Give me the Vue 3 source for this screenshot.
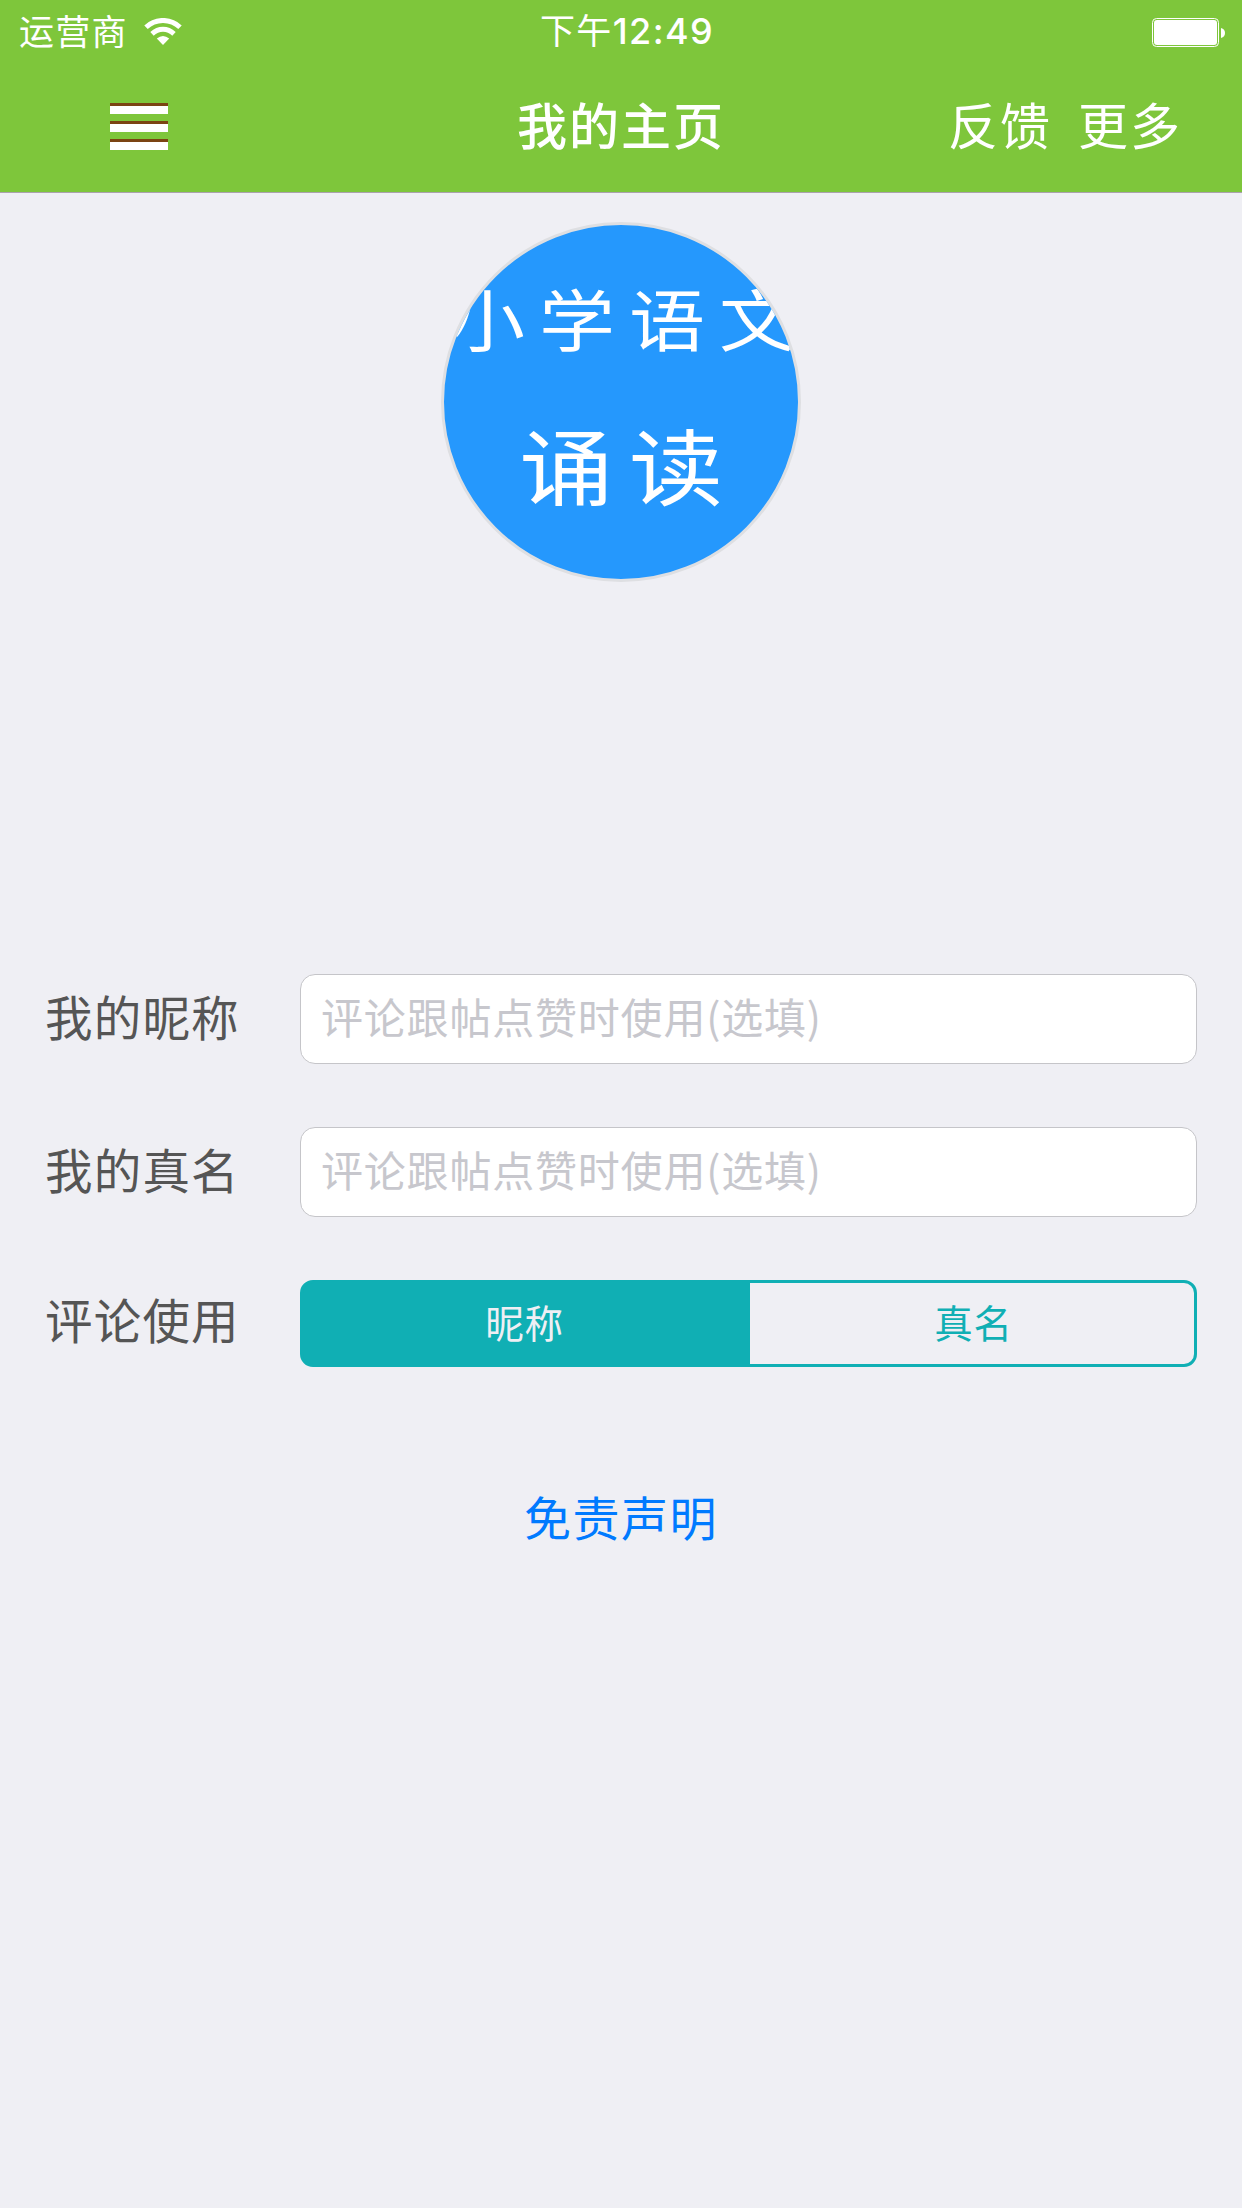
<!-- src/views/MyHome.vue -->
<template>
  <div class="page">
    <header class="header">
      <div class="status-bar">
        <div class="carrier">
          <span>运营商</span>
          <svg class="wifi" viewBox="0 0 38 28">
            <g fill="none" stroke="#fff" stroke-width="5">
              <path d="M2 9.2C11.5 .2 26.5 .2 36 9.2" />
              <path d="M8 15.8C14.5 9.8 23.5 9.8 30 15.8" />
            </g>
            <path d="M19 27L12.8 20.5Q19 15.5 25.2 20.5Z" fill="#fff" />
          </svg>
        </div>
        <div class="time">下午<span class="digits">12:49</span></div>
        <svg class="battery" viewBox="0 0 74 29">
          <rect x=".5" y=".5" width="66" height="28" rx="4" fill="none" stroke="#fff" />
          <rect x="2" y="2" width="63" height="25" rx="3" fill="#fff" />
          <path d="M69 10Q73 11 73 15Q73 19 69 20Z" fill="#fff" />
        </svg>
      </div>
      <nav class="nav-bar">
        <button class="menu" aria-label="菜单">
          <i v-for="n in 3" :key="n" />
        </button>
        <h1 class="title">我的主页</h1>
        <div class="actions">
          <button>反馈</button>
          <button>更多</button>
        </div>
      </nav>
    </header>

    <main class="content">
      <div class="avatar">
        <span class="avatar-top">小学语文</span>
        <span class="avatar-bottom">诵读</span>
      </div>

      <form class="form" @submit.prevent>
        <template v-for="field in fields" :key="field.key">
          <label :for="field.key">{{ field.label }}</label>
          <input
            :id="field.key"
            v-model="profile[field.key]"
            type="text"
            placeholder="评论跟帖点赞时使用(选填)"
          />
        </template>
        <label class="segment-label">评论使用</label>
        <div class="segment">
          <button
            v-for="(option, index) in options"
            :key="option"
            type="button"
            :class="{ active: selected === index }"
            @click="selected = index"
          >{{ option }}</button>
        </div>
      </form>

      <button class="disclaimer">免责声明</button>
    </main>
  </div>
</template>

<script setup>
import { reactive, ref } from 'vue'

const fields = [
  { key: 'nickname', label: '我的昵称' },
  { key: 'realname', label: '我的真名' }
]
const options = ['昵称', '真名']

const profile = reactive({ nickname: '', realname: '' })
const selected = ref(0)
</script>

<style>
body {
  margin: 0;
  background: #efeff4;
}
</style>

<style scoped>
.page {
  min-height: 2208px;
  background: #efeff4;
  font-family: "Noto Sans CJK SC", sans-serif;
  font-weight: 400;
}

button {
  padding: 0;
  border: none;
  background: none;
  font: inherit;
  color: inherit;
  letter-spacing: inherit;
  cursor: pointer;
}

.header {
  box-sizing: border-box;
  height: 193px;
  background: #7ec63b;
  border-bottom: 1px solid #aaa2ad;
  color: #fff;
}

.status-bar {
  display: grid;
  grid-template-columns: 1fr auto 1fr;
  align-items: center;
  height: 60px;
  padding: 0 16px 0 19px;
  font-size: 35px;
  line-height: 60px;
}

.carrier {
  display: flex;
  align-items: center;
  gap: 16px;
  letter-spacing: 1.3px;
}

.carrier span {
  line-height: 54px;
  padding-bottom: 4px;
}

.wifi {
  width: 38px;
  height: 28px;
}

.time {
  display: flex;
  padding-left: 9px;
  letter-spacing: 1.4px;
  line-height: 58px;
  padding-bottom: 2px;
}

.digits {
  font-family: Inter, sans-serif;
  font-size: 36px;
  font-weight: 500;
  line-height: 62px;
}

.battery {
  justify-self: end;
  width: 74px;
  height: 29px;
  margin-top: 1px;
}

.nav-bar {
  display: grid;
  grid-template-columns: 1fr auto 1fr;
  align-items: center;
  height: 132px;
  padding: 0 61px;
  font-size: 50px;
  line-height: 126px;
  letter-spacing: 2px;
}

.menu {
  display: flex;
  flex-direction: column;
  gap: 7px;
  width: 58px;
  margin: 1px 0 0 49px;
}

.menu i {
  height: 8px;
  border-top: 3px solid #7b4413;
  background: #fff;
}

.title {
  margin: 0;
  padding-bottom: 6px;
  font-size: inherit;
  font-weight: 500;
}

.actions {
  display: flex;
  justify-content: flex-end;
  gap: 26px;
  margin-right: -1px;
  padding-bottom: 6px;
}

.content {
  display: flex;
  flex-direction: column;
  align-items: center;
  padding: 29px 45px 0;
}

.avatar {
  display: flex;
  flex-direction: column;
  align-items: center;
  box-sizing: border-box;
  width: 360px;
  height: 360px;
  padding-top: 42px;
  border: 3px solid #dedfe2;
  border-radius: 50%;
  background: #2598fd;
  color: #fff;
  overflow: hidden;
  white-space: nowrap;
}

.avatar-top {
  font-size: 76px;
  line-height: 100px;
  letter-spacing: 14px;
  margin-right: -16px;
  transform: scaleY(0.88);
}

.avatar-bottom {
  margin-top: 36px;
  font-size: 94px;
  line-height: 120px;
  letter-spacing: 16px;
  margin-right: -16px;
  transform: scaleY(0.88);
}

.form {
  display: grid;
  grid-template-columns: 255px 897px;
  grid-template-rows: 90px 90px 87px;
  row-gap: 63px;
  margin-top: 392px;
  color: #555;
}

.form label {
  font-size: 47.5px;
  line-height: 84px;
  letter-spacing: 1.2px;
}

.form .segment-label {
  line-height: 77px;
}

.form input {
  box-sizing: border-box;
  min-width: 0;
  height: 90px;
  padding: 0 20px 8px;
  border: 1px solid #c5c5c9;
  border-radius: 15px;
  background: #fff;
  font: inherit;
  font-size: 42px;
  letter-spacing: 0.8px;
  outline: none;
}

.form input::placeholder {
  color: #c7c7cd;
  opacity: 1;
}

.segment {
  display: flex;
  box-sizing: border-box;
  border: 3px solid #10afb4;
  border-radius: 13px;
  background: linear-gradient(90deg, #10afb4 50%, transparent 50%);
  color: #10afb4;
  font-size: 38.5px;
  letter-spacing: 0.8px;
  overflow: hidden;
}

.segment button {
  flex: 1;
  padding: 0 0 5px 3px;
}

.segment .active {
  box-sizing: border-box;
  flex: 0 0 447px;
  padding: 0 4px 5px 0;
  background: #10afb4;
  color: #efeff4;
}

.disclaimer {
  margin-top: 109px;
  font-size: 47px;
  line-height: 80px;
  letter-spacing: 1.5px;
  color: #007aff;
}
</style>
